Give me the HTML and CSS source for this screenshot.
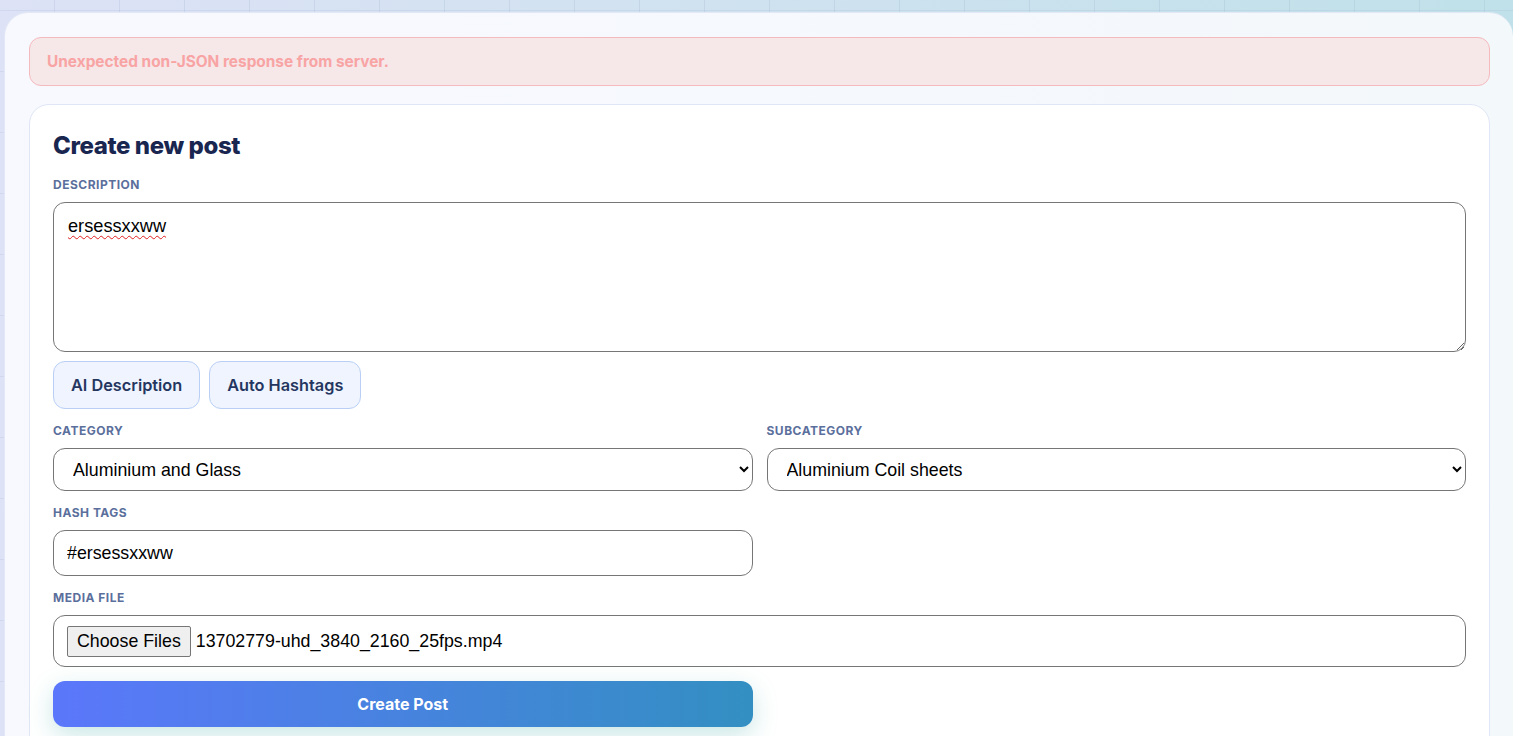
FILE: index.html
```html
<html>
	<head>
		<title>Create new post</title>
		<link rel="stylesheet" href="styles.css">
	</head>
	<body>
		<div class="page">
			<div class="panel">

				<div class="alert">Unexpected non-JSON response from server.</div>

				<form class="card">
					<h2 class="card-title">Create new post</h2>

					<div class="field">
						<label class="label" for="desc">Description</label>
						<textarea id="desc" class="textarea spelled">ersessxxww</textarea>
						<div class="ai-buttons">
							<button type="button" class="ghost-btn">AI Description</button>
							<button type="button" class="ghost-btn">Auto Hashtags</button>
						</div>
					</div>

					<div class="row">
						<div class="field">
							<label class="label" for="cat">Category</label>
							<select id="cat" class="select">
								<option>Aluminium and Glass</option>
							</select>
						</div>
						<div class="field">
							<label class="label" for="sub">Subcategory</label>
							<select id="sub" class="select">
								<option>Aluminium Coil sheets</option>
							</select>
						</div>
					</div>

					<div class="row">
						<div class="field">
							<label class="label" for="tags">Hash tags</label>
							<input id="tags" class="input" type="text" value="#ersessxxww">
						</div>
					</div>

					<div class="field">
						<label class="label">Media file</label>
						<div class="file-box">
							<span class="file-btn">Choose Files</span>
							<span class="file-name">13702779-uhd_3840_2160_25fps.mp4</span>
						</div>
					</div>

					<div class="row">
						<button type="button" class="submit-btn">Create Post</button>
					</div>
				</form>

			</div> <!-- end .panel -->
		</div> <!-- end .page -->
	</body>
</html>
```

FILE: styles.css
```css
html, body {
	margin: 0;
	height: 100%;
	overflow: hidden;
}

body {
	font-family: Inter, "Liberation Sans", sans-serif;
	background:
		linear-gradient(rgba(150,170,200,0.18) 1px, transparent 1px) 0 10px / 65px 61px,
		linear-gradient(90deg, rgba(150,170,200,0.22) 1px, transparent 1px) 54px 0 / 65px 61px,
		linear-gradient(90deg, #dde2f6 0%, #cfe2ef 50%, #c0e1e9 100%);
}

.page {
	padding: 12px 0 0 4px;
}

.panel {
	background: linear-gradient(90deg, #f8f9fe, #f3f8fb);
	border: 1px solid #e2e8f5;
	border-right: none;
	border-radius: 24px 24px 0 0;
	padding: 24px 23px 30px 24px;
	min-height: 800px;
}

.alert {
	background: #f6e7e9;
	border: 1px solid #f4babe;
	border-radius: 12px;
	color: #f8a4a4;
	font-weight: 700;
	font-size: 15.4px;
	height: 47px;
	line-height: 47px;
	padding: 0 17px;
	margin-bottom: 18px;
}

.card {
	margin: 0;
	background: #fff;
	border: 1px solid #dfe6f6;
	border-radius: 20px;
	padding: 26px 23px 40px 23px;
	min-height: 700px;
}

.card-title {
	margin: 0 0 16px;
	font-size: 24px;
	line-height: 30px;
	font-weight: 800;
	letter-spacing: -0.4px;
	color: #192650;
}

.field {
	margin-bottom: 14px;
}

.label {
	display: block;
	font-size: 12px;
	line-height: 15px;
	font-weight: 700;
	letter-spacing: 0.5px;
	text-transform: uppercase;
	color: #5b6f9c;
	margin-bottom: 10px;
}

.textarea, .select, .input, .file-box {
	box-sizing: border-box;
	width: 100%;
	border: 1px solid #767676;
	border-radius: 12px;
	background: #fff;
	font-family: "Liberation Sans", Arial, sans-serif;
	font-size: 17.8px;
	color: #000;
}

.textarea {
	display: block;
	height: 150px;
	padding: 13px 14px;
	resize: vertical;
	font-size: 18.2px;
}

.spelled {
	text-decoration: underline wavy #e02020;
	text-decoration-thickness: 1px;
	text-underline-offset: 3px;
}

.ai-buttons {
	display: flex;
	gap: 9px;
	margin-top: 9px;
}

.ghost-btn {
	height: 48px;
	padding: 0 17px;
	background: #eff4fe;
	border: 1px solid #b9cff6;
	border-radius: 12px;
	font-family: Inter, sans-serif;
	font-size: 16.3px;
	font-weight: 600;
	color: #24365f;
}

.row {
	display: grid;
	grid-template-columns: 1fr 1fr;
	column-gap: 14px;
}

.select {
	height: 43px;
	padding: 0 15px;
}

.input {
	height: 46px;
	padding: 0 13px;
}

.file-box {
	display: flex;
	align-items: center;
	height: 52px;
	padding: 0 13px;
}

.file-btn {
	display: inline-block;
	background: #efefef;
	border: 1px solid #767676;
	border-radius: 2px;
	padding: 4px 9px;
	margin-right: 5px;
	line-height: 21px;
}

.submit-btn {
	height: 46px;
	border: none;
	border-radius: 12px;
	background: linear-gradient(90deg, #5b77fb, #338fc2);
	color: #fff;
	font-family: Inter, sans-serif;
	font-size: 16px;
	font-weight: 700;
	box-shadow: 0 8px 24px rgba(60, 170, 160, 0.28);
}
```
